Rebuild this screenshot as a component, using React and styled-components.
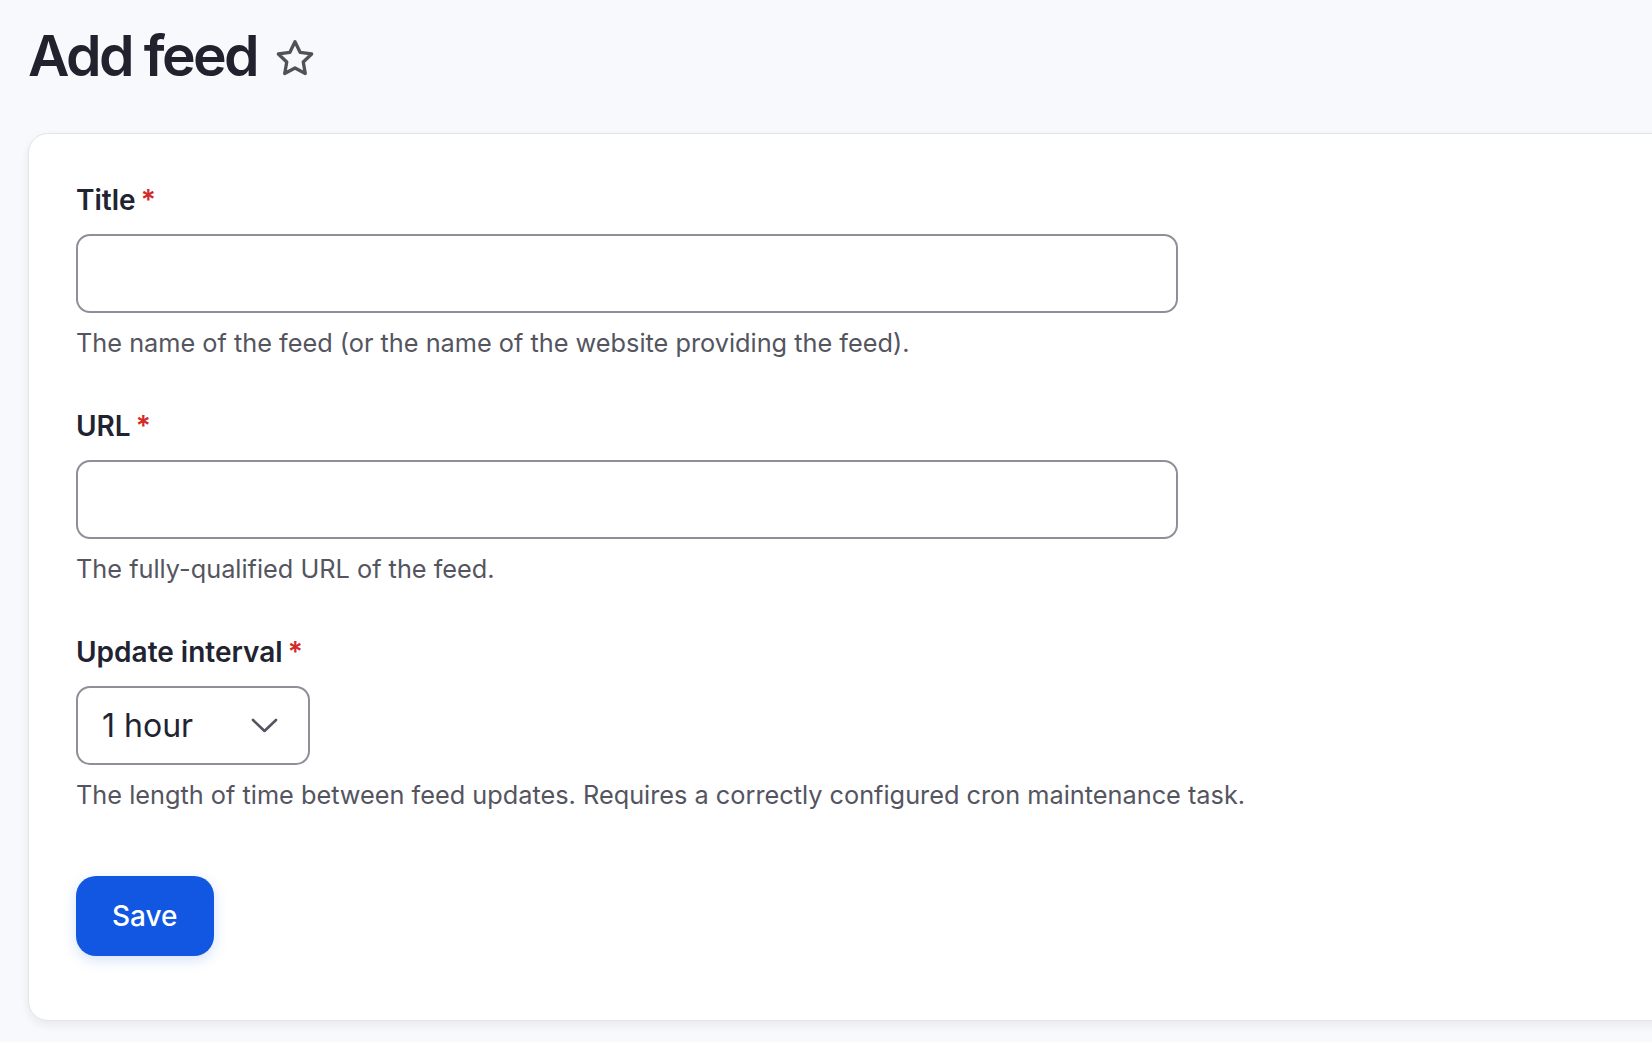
import React from "react";
import styled, { createGlobalStyle } from "styled-components";

const Global = createGlobalStyle`
  html, body { margin: 0; padding: 0; }
  body {
    background: #f8f9fc;
    font-family: Inter, "Noto Sans", sans-serif;
    color: #222330;
    overflow: hidden;
  }
`;

const Page = styled.div`
  padding: 20px 0 0 28px;
  min-height: 1042px;
  box-sizing: border-box;
`;

const Header = styled.div`
  display: flex;
  align-items: center;
  gap: 18px;
`;

const Heading = styled.h1`
  margin: 0;
  font-size: 57px;
  line-height: 72px;
  font-weight: 600;
  letter-spacing: -2.6px;
  color: #21222e;
`;

const StarButton = styled.span`
  display: inline-flex;
  width: 40px;
  height: 40px;
  color: #505159;
  margin-top: 4px;
`;

const Card = styled.form`
  margin-top: 41px;
  margin-right: -60px;
  background: #fff;
  border: 1px solid #e4e5ea;
  border-radius: 20px;
  box-shadow: 0 4px 10px rgba(30, 35, 60, 0.07);
  padding: 48px 47px 64px 47px;
`;

const Field = styled.div`
  display: flex;
  flex-direction: column;
  align-items: flex-start;
  margin-bottom: ${(p) => p.$gap || 47}px;
`;

const Label = styled.label`
  font-size: 28px;
  line-height: 36px;
  font-weight: 600;
  color: #222330;
  margin-bottom: 16px;
`;

const Required = styled.span`
  color: #d32a2a;
  margin-left: 5px;
  font-weight: 600;
`;

const TextInput = styled.input`
  box-sizing: border-box;
  width: 1102px;
  height: 79px;
  border: 2px solid #8e9099;
  border-radius: 14px;
  background: #fff;
  padding: 0 24px;
  font: inherit;
  font-size: 32px;
  outline: none;
`;

const SelectBox = styled.div`
  box-sizing: border-box;
  width: 234px;
  height: 79px;
  border: 2px solid #8e9099;
  border-radius: 14px;
  background: #fff;
  padding: 0 30px 0 24px;
  display: flex;
  align-items: center;
  justify-content: space-between;
  font-size: 32px;
  color: #222330;
`;

const Chevron = styled.svg`
  width: 27px;
  height: 15px;
  color: #545560;
`;

const Description = styled.div`
  margin-top: 12px;
  font-size: 25.3px;
  line-height: 36px;
  color: #54555f;
`;

const SaveButton = styled.button`
  box-sizing: border-box;
  height: 80px;
  padding: 0 36px;
  border: none;
  border-radius: 20px;
  background: #1157e1;
  color: #fff;
  font-family: Inter, "Noto Sans", sans-serif;
  font-size: 28px;
  font-weight: 500;
  box-shadow: 0 4px 14px rgba(17, 87, 225, 0.18);
  cursor: pointer;
`;

const StarIcon = () => (
  <svg viewBox="0 0 24 24" width="40" height="40" fill="none">
    <polygon
      points="12,2.3 15.06,8.59 21.99,9.56 16.95,14.41 18.17,21.29 12,18 5.83,21.29 7.05,14.41 2.01,9.56 8.94,8.59"
      stroke="currentColor"
      strokeWidth="2"
      strokeLinejoin="round"
    />
  </svg>
);

export default function App() {
  return (
    <>
      <Global />
      <Page>
        <Header>
          <Heading>Add feed</Heading>
          <StarButton>
            <StarIcon />
          </StarButton>
        </Header>
        <Card onSubmit={(e) => e.preventDefault()}>
          <Field>
            <Label>
              Title<Required>*</Required>
            </Label>
            <TextInput type="text" />
            <Description>
              The name of the feed (or the name of the website providing the feed).
            </Description>
          </Field>
          <Field>
            <Label>
              URL<Required>*</Required>
            </Label>
            <TextInput type="text" />
            <Description>The fully-qualified URL of the feed.</Description>
          </Field>
          <Field $gap={63}>
            <Label>
              Update interval<Required>*</Required>
            </Label>
            <SelectBox>
              <span>1 hour</span>
              <Chevron viewBox="0 0 27 15" fill="none">
                <path
                  d="M2 2 L13.5 13 L25 2"
                  stroke="currentColor"
                  strokeWidth="2.6"
                  strokeLinecap="round"
                  strokeLinejoin="round"
                />
              </Chevron>
            </SelectBox>
            <Description>
              The length of time between feed updates. Requires a correctly configured cron maintenance task.
            </Description>
          </Field>
          <SaveButton type="submit">Save</SaveButton>
        </Card>
      </Page>
    </>
  );
}
